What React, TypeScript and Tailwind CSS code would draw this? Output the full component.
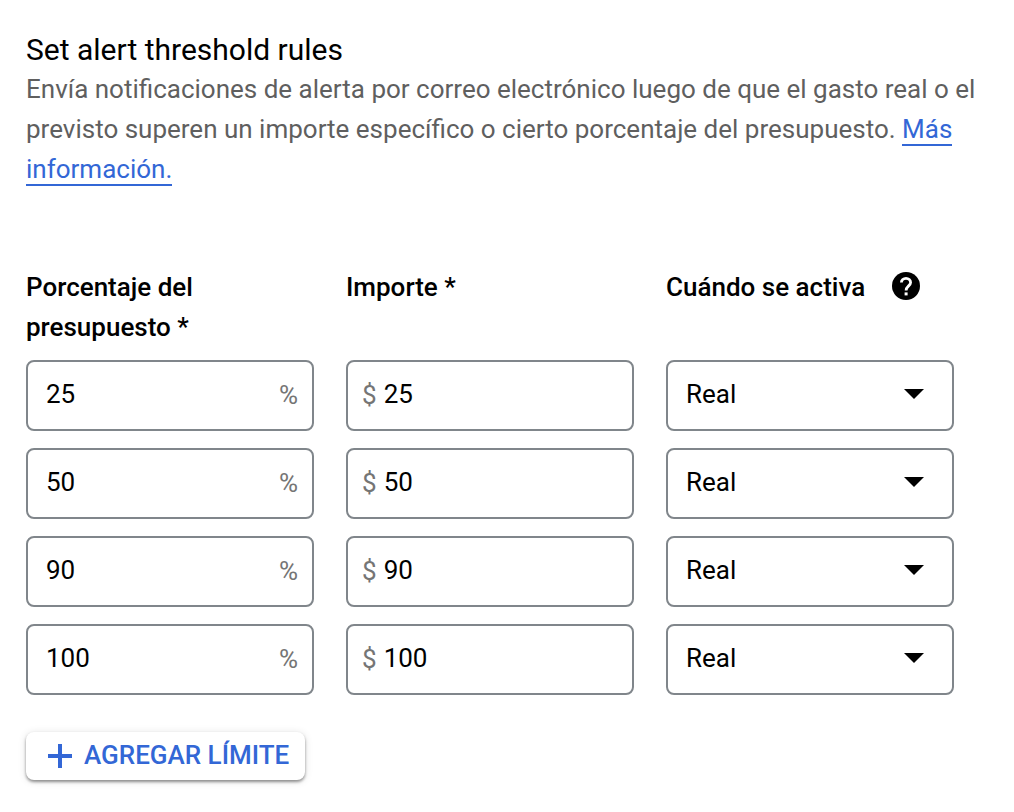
const thresholds = [
  { percent: "25", amount: "25" },
  { percent: "50", amount: "50" },
  { percent: "90", amount: "90" },
  { percent: "100", amount: "100" },
];

const fieldClass =
  "flex h-[71px] items-center rounded-lg border-2 border-[#80868b] bg-white text-black";

function HelpIcon() {
  return (
    <svg viewBox="0 0 28 28" className="size-7" aria-hidden="true">
      <circle cx="14" cy="14" r="14" fill="#000" />
      <path
        d="M9.4 10.6a4.6 4.3 0 0 1 9.2 0c0 3.2-4.5 3.6-4.5 8"
        fill="none"
        stroke="#fff"
        strokeWidth="2.8"
      />
      <path d="M12.6 20.4h3v3h-3z" fill="#fff" />
    </svg>
  );
}

function ThresholdRow({ percent, amount }: { percent: string; amount: string }) {
  return (
    <>
      <div className={fieldClass}>
        <input
          type="text"
          defaultValue={percent}
          aria-labelledby="percent-label"
          className="h-full w-full min-w-0 flex-1 pl-[18px] pb-1 outline-none"
        />
        <span className="pr-3.5 pb-0.5 text-[#757575]">%</span>
      </div>
      <div className={fieldClass}>
        <span className="pl-3.5 pb-0.5 text-[#757575]">$</span>
        <input
          type="text"
          defaultValue={amount}
          aria-labelledby="amount-label"
          className="h-full w-full min-w-0 flex-1 pl-[7px] pb-1 outline-none"
        />
      </div>
      <div className="relative">
        <select
          defaultValue="actual"
          aria-labelledby="trigger-label"
          className={`${fieldClass} w-full appearance-none pl-[18px] pb-1 outline-none`}
        >
          <option value="actual">Real</option>
          <option value="forecast">Previsto</option>
        </select>
        <svg
          viewBox="0 0 20 10"
          className="pointer-events-none absolute top-[29px] right-[30px] h-2.5 w-5"
          aria-hidden="true"
        >
          <path d="M0 0h20L10 10z" fill="#000" />
        </svg>
      </div>
    </>
  );
}

export default function App() {
  return (
    <main className="bg-white px-[26px] pt-[31px] pb-8 font-['Roboto',sans-serif] text-[26px] leading-10 text-black">
      <h1 className="text-[30px] leading-[38px]">Set alert threshold rules</h1>
      <p className="text-[#5f5f5f]">
        Envía notificaciones de alerta por correo electrónico luego de que el gasto real o el
        previsto superen un importe específico o cierto porcentaje del presupuesto.{" "}
        <a href="#mas-informacion" className="border-b-2 border-[#3367d6] text-[#3367d6]">
          Más información.
        </a>
      </p>

      <form className="mt-[78px]">
        <div className="grid max-w-[928px] grid-cols-3 gap-x-8 gap-y-[17px]">
          <div id="percent-label" className="-mb-1 font-medium">
            Porcentaje del presupuesto *
          </div>
          <div id="amount-label" className="font-medium">
            Importe *
          </div>
          <div className="flex items-start font-medium">
            <span id="trigger-label">Cuándo se activa</span>
            <button type="button" aria-label="Ayuda" className="ml-[27px] pt-[5px]">
              <HelpIcon />
            </button>
          </div>
          {thresholds.map((t) => (
            <ThresholdRow key={t.percent} percent={t.percent} amount={t.amount} />
          ))}
        </div>

        <button
          type="button"
          className="mt-[37px] flex h-12 items-center gap-3 rounded-lg bg-white pr-4 pl-[22px] font-medium text-[#3367d6] shadow-[0_2px_3px_rgba(0,0,0,0.4),0_1px_8px_rgba(0,0,0,0.12)]"
        >
          <svg viewBox="0 0 24 24" className="size-6" aria-hidden="true">
            <path d="M10 0h4v10h10v4H14v10h-4V14H0v-4h10z" fill="currentColor" />
          </svg>
          <span className="pb-0.5">AGREGAR LÍMITE</span>
        </button>
      </form>
    </main>
  );
}
